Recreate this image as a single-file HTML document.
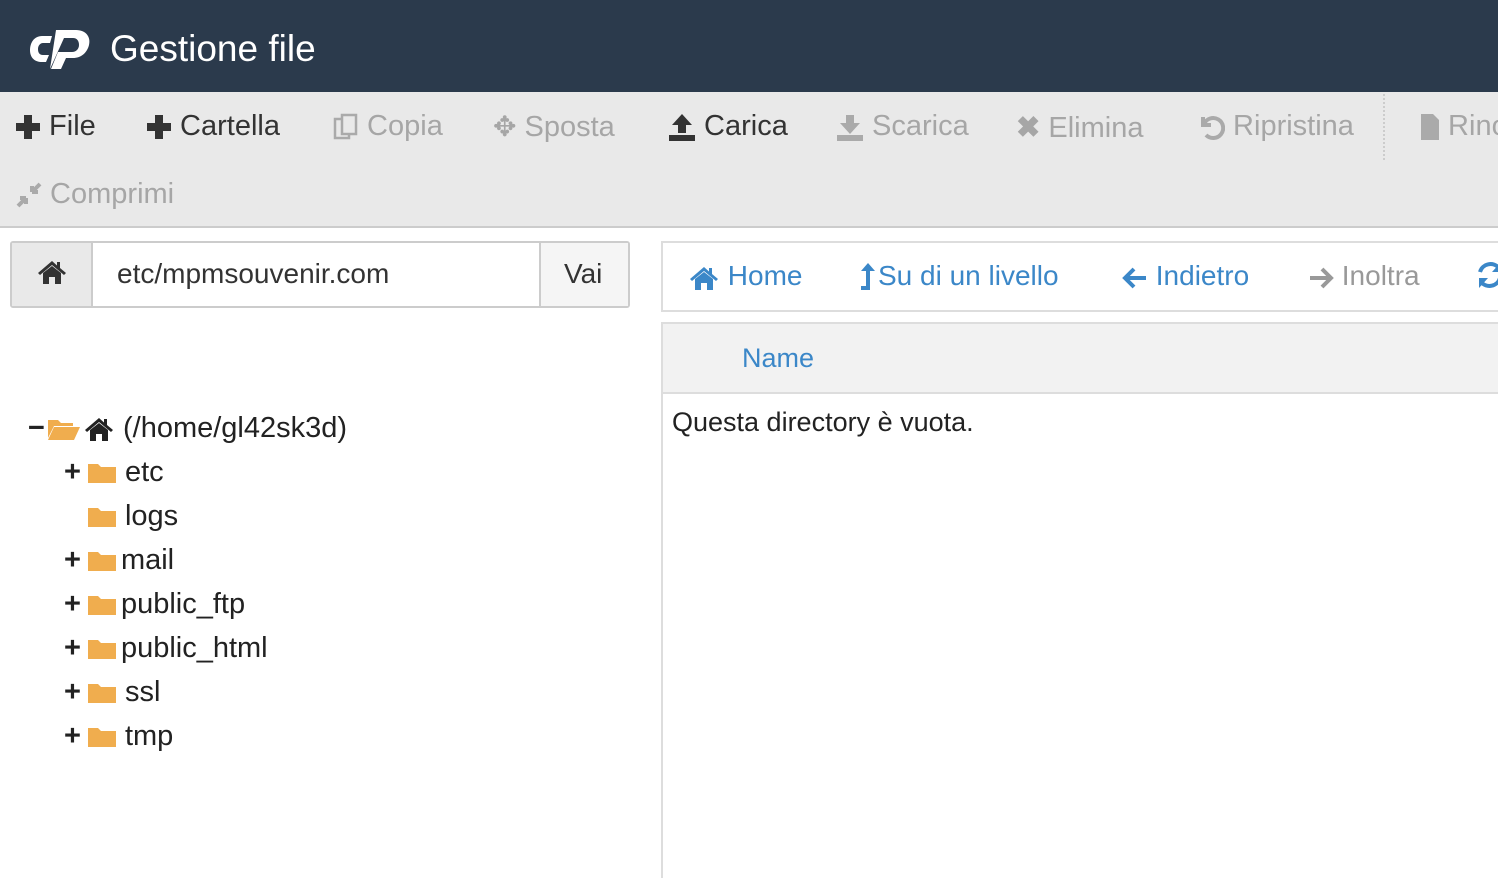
<!DOCTYPE html>
<html><head><meta charset="utf-8"><style>
*{margin:0;padding:0;box-sizing:border-box}
body{width:1498px;height:878px;overflow:hidden;background:#fff;font-family:"Liberation Sans",sans-serif;position:relative}
.a{position:absolute;white-space:nowrap}
.hdr{position:absolute;left:0;top:0;width:1498px;height:92px;background:#2b3a4c}
.tb{position:absolute;left:0;top:92px;width:1498px;height:136px;background:#e9e9e9;border-bottom:2px solid #ccc}
.t{font-size:29px;color:#333;top:110px}
.g{color:#a6a6a6}
.tree{font-size:29px;color:#222}
.bl{color:#3b87c8}
svg{display:inline-block;vertical-align:middle}
</style></head><body>
<div class="hdr"></div>
<svg class="a" style="left:30px;top:28px" width="62" height="42" viewBox="0 0 62 42"><path d="M22 8 H12 C4 8 0 15 0 22 C0 30 5 34 12 34 H16 L19 27 H13 C9 27 8 24 8 21 C8 18 10 15 13 15 H20 Z" fill="#fff"/><path d="M26 2 H46 C56 2 61 9 59 17 C57 25 51 30 43 30 H36 L31 41 H21 L28 24 H42 C46 24 49 21 49 17 C49 13 47 10 43 10 H34 L20 41 Z" fill="#fff"/></svg>
<div class="a" style="left:110px;top:28px;font-size:37px;color:#fff">Gestione file</div>
<div class="tb"></div>
<div class="a t" style="left:15px"><svg width="26" height="26" viewBox="0 0 26 26"><path d="M9 1H17V9H25V17H17V25H9V17H1V9H9Z" fill="#333"/></svg> File</div>
<div class="a t" style="left:146px"><svg width="26" height="26" viewBox="0 0 26 26"><path d="M9 1H17V9H25V17H17V25H9V17H1V9H9Z" fill="#333"/></svg> Cartella</div>
<div class="a t g" style="left:333px"><svg width="26" height="28" viewBox="0 0 26 28"><rect x="2" y="6" width="14" height="19" fill="none" stroke="#aaa" stroke-width="2.5"/><rect x="9" y="2" width="14" height="19" fill="#e9e9e9" stroke="#aaa" stroke-width="2.5"/></svg> Copia</div>
<div class="a t g" style="left:493px"><span style="font-size:28px">✥</span> Sposta</div>
<div class="a t" style="left:668px"><svg width="28" height="30" viewBox="0 0 28 30"><path d="M14 2 L24 13 H18 V21 H10 V13 H4 Z" fill="#333"/><rect x="1" y="23" width="26" height="6" fill="#333"/></svg> Carica</div>
<div class="a t g" style="left:836px"><svg width="28" height="30" viewBox="0 0 28 30"><path d="M14 22 L24 11 H18 V3 H10 V11 H4 Z" fill="#aaa"/><rect x="1" y="23" width="26" height="6" fill="#aaa"/></svg> Scarica</div>
<div class="a t g" style="left:1016px"><b>✖</b> Elimina</div>
<div class="a t g" style="left:1197px"><svg width="28" height="28" viewBox="0 0 28 28"><path d="M6 4V12H14" fill="none" stroke="#aaa" stroke-width="4"/><path d="M7 11 A10 10 0 1 1 9 22" fill="none" stroke="#aaa" stroke-width="4"/></svg> Ripristina</div>
<div class="a" style="left:1383px;top:94px;height:66px;border-left:2px dotted #ccc"></div>
<div class="a t g" style="left:1420px"><svg width="20" height="28" viewBox="0 0 20 28"><path d="M1 1H13L19 7V27H1Z" fill="#aaa"/></svg> Rinomina</div>
<div class="a t g" style="left:16px;top:178px"><svg width="26" height="26" viewBox="0 0 26 26"><path d="M2 24L10 16M10 16H4M10 16V22M24 2L16 10M16 10H22M16 10V4" stroke="#aaa" stroke-width="4" fill="none"/></svg> Comprimi</div>

<div class="a" style="left:10px;top:241px;width:620px;height:67px;border:2px solid #ccc;border-radius:3px;background:#fff"></div>
<div class="a" style="left:12px;top:243px;width:81px;height:63px;background:#e9e9e9;border-right:2px solid #ccc"></div>
<div class="a" style="left:37px;top:258px"><svg width="30" height="28" viewBox="0 0 30 28"><path d="M15 3 L1 15 L3 17 L15 7 L27 17 L29 15 L23 10 V4 H20 V7.5 Z" fill="#333"/><path d="M6 15 L15 8 L24 15 V26 H18 V19 H12 V26 H6 Z" fill="#333"/></svg></div>
<div class="a" style="left:117px;top:258px;font-size:28px;color:#333">etc/mpmsouvenir.com</div>
<div class="a" style="left:539px;top:243px;width:89px;height:63px;background:#f5f5f5;border-left:2px solid #ccc"></div>
<div class="a" style="left:564px;top:258px;font-size:28px;color:#333">Vai</div>

<div class="a" style="left:661px;top:241px;width:850px;height:71px;border:2px solid #ddd"></div>
<div class="a bl" style="left:688px;top:260px;font-size:28px"><svg width="32" height="28" viewBox="0 0 30 28"><path d="M15 3 L1 15 L3 17 L15 7 L27 17 L29 15 L23 10 V4 H20 V7.5 Z" fill="#3b87c8"/><path d="M6 15 L15 8 L24 15 V26 H18 V19 H12 V26 H6 Z" fill="#3b87c8"/></svg> Home</div>
<div class="a bl" style="left:858px;top:260px;font-size:28px"><svg width="20" height="32" viewBox="0 0 20 32"><path d="M10 1L17 9H12V28H3V24H8V9H3Z" fill="#3b87c8"/></svg>Su di un livello</div>
<div class="a bl" style="left:1122px;top:260px;font-size:28px"><svg width="26" height="26" viewBox="0 0 26 26"><path d="M24 13H4M12 4L3 13L12 22" stroke="#3b87c8" stroke-width="4" fill="none"/></svg> Indietro</div>
<div class="a" style="left:1308px;top:260px;font-size:28px;color:#999"><svg width="26" height="26" viewBox="0 0 26 26"><path d="M2 13H22M14 4L23 13L14 22" stroke="#999" stroke-width="4" fill="none"/></svg> Inoltra</div>
<div class="a" style="left:1476px;top:260px"><svg width="28" height="30" viewBox="0 0 28 30"><path d="M4 12A11 11 0 0 1 23 8M24 18A11 11 0 0 1 5 22" stroke="#3b87c8" stroke-width="4" fill="none"/><path d="M25 2V12H16Z M3 28V18H12Z" fill="#3b87c8"/></svg></div>
<div class="a" style="left:661px;top:322px;width:850px;height:72px;background:#f2f2f2;border:2px solid #ddd"></div>
<div class="a bl" style="left:742px;top:343px;font-size:27px">Name</div>
<div class="a" style="left:661px;top:394px;width:2px;height:484px;background:#ddd"></div>
<div class="a" style="left:672px;top:407px;font-size:27px;color:#222">Questa directory è vuota.</div>

<div class="a tree" style="left:28px;top:412px"><b>−</b><svg width="34" height="26" viewBox="0 0 34 26" style="margin:0 2px"><path d="M1 4H11L14 7H26V10H7L1 22Z" fill="#f0ad4e"/><path d="M7 11H33L27 24H1Z" fill="#f0ad4e"/></svg><svg width="32" height="28" viewBox="0 0 30 28"><path d="M15 3 L1 15 L3 17 L15 7 L27 17 L29 15 L23 10 V4 H20 V7.5 Z" fill="#222"/><path d="M6 15 L15 8 L24 15 V26 H18 V19 H12 V26 H6 Z" fill="#222"/></svg> (/home/gl42sk3d)</div>
<div class="a tree" style="left:64px;top:456px"><b>+</b><svg width="30" height="24" viewBox="0 0 30 24" style="margin:0 8px 0 6px"><path d="M1 3H11L14 6H29V22H1Z" fill="#f0ad4e"/></svg>etc</div>
<div class="a tree" style="left:64px;top:500px"><b style="visibility:hidden">+</b><svg width="30" height="24" viewBox="0 0 30 24" style="margin:0 8px 0 6px"><path d="M1 3H11L14 6H29V22H1Z" fill="#f0ad4e"/></svg>logs</div>
<div class="a tree" style="left:64px;top:544px"><b>+</b><svg width="30" height="24" viewBox="0 0 30 24" style="margin:0 4px 0 6px"><path d="M1 3H11L14 6H29V22H1Z" fill="#f0ad4e"/></svg>mail</div>
<div class="a tree" style="left:64px;top:588px"><b>+</b><svg width="30" height="24" viewBox="0 0 30 24" style="margin:0 4px 0 6px"><path d="M1 3H11L14 6H29V22H1Z" fill="#f0ad4e"/></svg>public_ftp</div>
<div class="a tree" style="left:64px;top:632px"><b>+</b><svg width="30" height="24" viewBox="0 0 30 24" style="margin:0 4px 0 6px"><path d="M1 3H11L14 6H29V22H1Z" fill="#f0ad4e"/></svg>public_html</div>
<div class="a tree" style="left:64px;top:676px"><b>+</b><svg width="30" height="24" viewBox="0 0 30 24" style="margin:0 8px 0 6px"><path d="M1 3H11L14 6H29V22H1Z" fill="#f0ad4e"/></svg>ssl</div>
<div class="a tree" style="left:64px;top:720px"><b>+</b><svg width="30" height="24" viewBox="0 0 30 24" style="margin:0 8px 0 6px"><path d="M1 3H11L14 6H29V22H1Z" fill="#f0ad4e"/></svg>tmp</div>
</body></html>
